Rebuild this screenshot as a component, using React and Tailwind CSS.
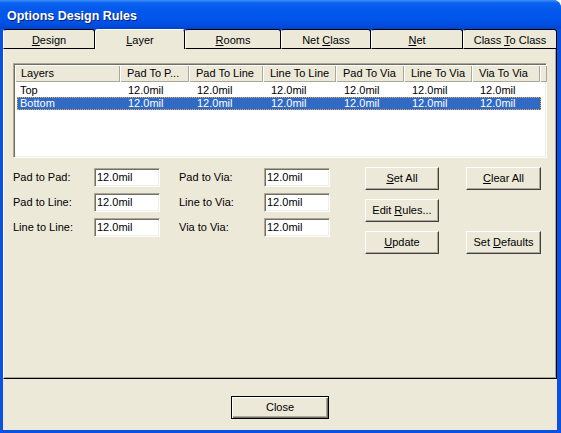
import React from "react";

const font = "font-['Liberation_Sans',Arial,sans-serif]";

function Tab({ children, selected, w }) {
  if (selected) {
    return (
      <div
        className={`${w} h-[20px] flex-none flex items-start justify-center pt-[4px] bg-[#ece9d8] border-t border-l border-r border-t-white border-l-white border-r-black rounded-t-[3px] text-[11px] leading-[13px] text-black`}
      >
        {children}
      </div>
    );
  }
  return (
    <div
      className={`${w} h-[20px] flex-none flex items-start justify-center pt-[4px] bg-[#ece9d8] border border-t-black border-r-black border-b-black border-l-white rounded-t-[3px] text-[11px] leading-[13px] text-black`}
    >
      {children}
    </div>
  );
}

function HeadCell({ w, children, first }) {
  return (
    <div
      className={`${w} h-[17px] flex-none flex items-center ${first ? "pl-[6px]" : "pl-[7px]"} bg-[#ece9d8] shadow-[inset_1px_1px_0_#ffffff,inset_-1px_-1px_0_#aca899] text-[11px] leading-[13px] whitespace-nowrap overflow-hidden`}
    >
      {children}
    </div>
  );
}

const cols = ["w-[69px]", "w-[74px]", "w-[73px]", "w-[68px]", "w-[68px]", "w-[68px]"];

function Row({ name, selected }) {
  return (
    <div
      className={`ml-[2px] w-[524px] h-[13px] flex items-center text-[11px] leading-[13px] ${
        selected
          ? "bg-[#316ac5] text-white outline-1 outline-dotted outline-[#e0a850] -outline-offset-1"
          : "text-black"
      }`}
    >
      <div className="w-[103px] flex-none pl-[3px]">{name}</div>
      {cols.map((c, i) => (
        <div key={i} className={`${c} flex-none pl-[8px]`}>
          12.0mil
        </div>
      ))}
    </div>
  );
}

function Field({ label, lw }) {
  return (
    <>
      <div className={`${lw} flex-none text-[11px] leading-[13px] text-black`}>{label}</div>
      <div className="w-[66px] h-[19px] flex-none flex items-center bg-white border border-t-[#aca899] border-l-[#aca899] border-r-white border-b-white shadow-[inset_1px_1px_0_#716f64,inset_-1px_-1px_0_#f1efe2] pl-[2px] text-[11px] leading-[13px] text-black">
        12.0mil
      </div>
    </>
  );
}

function Btn({ children, w = "w-[74px]" }) {
  return (
    <div
      className={`${w} h-[23px] flex items-center justify-center bg-[#ece9d8] border border-t-white border-l-white border-r-[#404040] border-b-[#404040] shadow-[inset_-1px_-1px_0_#aca899] text-[11px] leading-[13px] text-black`}
    >
      {children}
    </div>
  );
}

export default function App() {
  return (
    <div className={`${font} w-[561px] h-[433px] bg-white`}>
      <div className="w-[561px] h-[433px] flex flex-col bg-[#0a50e2] rounded-tr-[8px] overflow-hidden">
        {/* Title bar */}
        <div className="h-[29px] flex-none flex items-center pl-[7px] pt-[3px] bg-[linear-gradient(to_bottom,#3d8ff7_0%,#0b62ef_10%,#0458ec_35%,#0055ea_65%,#004ee0_85%,#0043cf_100%)]">
          <span className="text-white font-bold text-[12.5px] leading-[15px] [text-shadow:1px_1px_0_#0a246a]">
            Options Design Rules
          </span>
        </div>
        {/* Body */}
        <div className="flex-1 flex flex-col ml-[3px] mr-[4px] mb-[3px]">
          {/* Tabs */}
          <div className="h-[20px] flex-none flex">
            <Tab w="w-[92px]">
              <span><u>D</u>esign</span>
            </Tab>
            <Tab w="w-[90px]" selected>
              <span><u>L</u>ayer</span>
            </Tab>
            <Tab w="w-[96px]">
              <span><u>R</u>ooms</span>
            </Tab>
            <Tab w="w-[90px]">
              <span>Net <u>C</u>lass</span>
            </Tab>
            <Tab w="w-[92px]">
              <span><u>N</u>et</span>
            </Tab>
            <Tab w="w-[94px]">
              <span>Class <u>T</u>o Class</span>
            </Tab>
          </div>
          {/* Panel */}
          <div className="h-[330px] flex-none flex flex-col bg-[#ece9d8] border-l border-r border-b border-l-white border-r-black border-b-black shadow-[inset_-1px_-1px_0_#aca899]">
            {/* List */}
            <div className="mt-[14px] ml-[9px] w-[534px] h-[95px] p-[1px] bg-white border border-t-[#aca899] border-l-[#aca899] border-r-white border-b-white shadow-[inset_1px_1px_0_#716f64,inset_-1px_-1px_0_#f1efe2]">
              <div className="flex">
                <HeadCell w="w-[105px]" first>Layers</HeadCell>
                <HeadCell w="w-[69px]">Pad To P...</HeadCell>
                <HeadCell w="w-[74px]">Pad To Line</HeadCell>
                <HeadCell w="w-[73px]">Line To Line</HeadCell>
                <HeadCell w="w-[68px]">Pad To Via</HeadCell>
                <HeadCell w="w-[68px]">Line To Via</HeadCell>
                <HeadCell w="w-[68px]">Via To Via</HeadCell>
                <HeadCell w="w-[5px]"></HeadCell>
              </div>
              <div className="mt-[2px] flex flex-col">
                <Row name="Top" />
                <Row name="Bottom" selected />
              </div>
            </div>
            {/* Form */}
            <div className="mt-[9px] ml-[9px] flex">
              <div className="mt-[1px] flex flex-col gap-[6px]">
                <div className="flex items-center h-[19px]">
                  <Field label="Pad to Pad:" lw="w-[81px]" />
                  <div className="w-[19px] flex-none" />
                  <Field label="Pad to Via:" lw="w-[85px]" />
                </div>
                <div className="flex items-center h-[19px]">
                  <Field label="Pad to Line:" lw="w-[81px]" />
                  <div className="w-[19px] flex-none" />
                  <Field label="Line to Via:" lw="w-[85px]" />
                </div>
                <div className="flex items-center h-[19px]">
                  <Field label="Line to Line:" lw="w-[81px]" />
                  <div className="w-[19px] flex-none" />
                  <Field label="Via to Via:" lw="w-[85px]" />
                </div>
              </div>
              <div className="ml-[35px] grid grid-cols-[74px_75px] gap-x-[27px] gap-y-[9px]">
                <Btn><span><u>S</u>et All</span></Btn>
                <Btn w="w-[75px]"><span><u>C</u>lear All</span></Btn>
                <Btn><span>Edit <u>R</u>ules...</span></Btn>
                <div />
                <Btn><span><u>U</u>pdate</span></Btn>
                <Btn w="w-[75px]"><span>Set <u>D</u>efaults</span></Btn>
              </div>
            </div>
          </div>
          {/* Bottom */}
          <div className="flex-1 bg-[#ece9d8] flex justify-center pt-[17px]">
            <div className="w-[98px] h-[23px] border border-black flex items-center justify-center bg-[#ece9d8] shadow-[inset_1px_1px_0_#ffffff,inset_-1px_-1px_0_#716f64,inset_-2px_-2px_0_#aca899] text-[11px] leading-[13px] text-black">
              Close
            </div>
          </div>
        </div>
      </div>
    </div>
  );
}
